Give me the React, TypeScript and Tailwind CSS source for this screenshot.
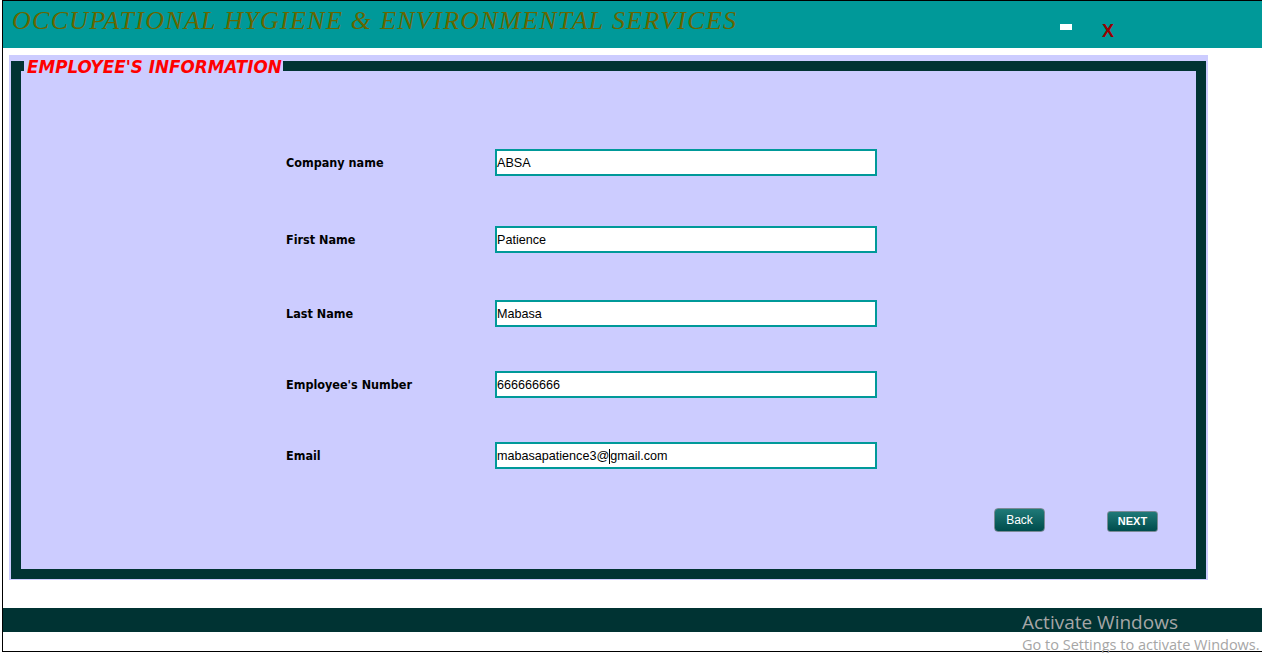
import React from 'react';

const fields = [
  { label: 'Company name', value: 'ABSA', mt: 'mt-[78px]' },
  { label: 'First Name', value: 'Patience', mt: 'mt-[50px]' },
  { label: 'Last Name', value: 'Mabasa', mt: 'mt-[47px]' },
  { label: "Employee's Number", value: '666666666', mt: 'mt-[44px]' },
  { label: 'Email', value: 'mabasapatience3@gmail.com', mt: 'mt-[44px]', caret: 16 },
];

const Field: React.FC<{ label: string; value: string; mt: string; caret?: number }> = ({ label, value, mt, caret }) => (
  <div className={`flex items-center ${mt}`}>
    <label className="w-[209px] pt-[2px] text-[12.5px] font-bold text-black [font-family:'DejaVu_Sans_Condensed','DejaVu_Sans',sans-serif]">
      {label}
    </label>
    <div className="w-[382px] h-[27px] border-2 border-[#009999] bg-white flex items-center pt-[1px] text-[12.6px] text-black [font-family:'Liberation_Sans',Arial,sans-serif]">
      {caret ? (
        <>
          <span>{value.slice(0, caret)}</span>
          <span className="inline-block w-px h-[15px] bg-black" />
          <span>{value.slice(caret)}</span>
        </>
      ) : (
        <span>{value}</span>
      )}
    </div>
  </div>
);

export default function App() {
  return (
    <div className="w-[1262px] h-[653px] bg-white pl-[2px] relative overflow-hidden">
      <div className="h-[652px] border-l border-t border-b border-black flex flex-col">
        {/* title bar */}
        <div className="h-[47px] bg-[#009999] flex items-start shrink-0">
          <h1 className="ml-[9px] mt-[5px] text-[26px] tracking-[1.3px] italic text-[#666600] leading-[30px] whitespace-nowrap [font-family:'Liberation_Serif','Times_New_Roman',serif]">
            OCCUPATIONAL HYGIENE &amp; ENVIRONMENTAL SERVICES
          </h1>
          <div className="absolute left-[1060px] top-[24px] w-[12px] h-[6px] bg-white" />
          <div className="absolute left-[1102px] top-[20px] text-[18px] font-bold text-[#990000] leading-[22px] [font-family:'Liberation_Sans',Arial,sans-serif]">
            X
          </div>
        </div>

        {/* panel */}
        <div className="mt-[7px] ml-[6px] w-[1199px] h-[525px] bg-[#ccccff] pt-[6px] px-[2px] pb-[1px] relative">
          <div className="h-full border-[10px] border-[#003333] bg-[#ccccff] flex flex-col">
            <div className="pl-[265px]">
              {fields.map((f) => (
                <Field key={f.label} {...f} />
              ))}
            </div>
            <div className="flex items-end justify-end gap-[62px] pr-[38px] mt-[39px]">
              <button className="w-[51px] h-[24px] rounded-[4px] border border-[#7a8a96] bg-gradient-to-b from-[#1f7a78] to-[#004c4c] text-white text-[12px] [font-family:'Liberation_Sans',Arial,sans-serif]">
                Back
              </button>
              <button className="w-[51px] h-[21px] rounded-[3px] border border-[#7a8a96] bg-gradient-to-b from-[#1f7a78] to-[#004c4c] text-white text-[11px] font-bold [font-family:'Liberation_Sans',Arial,sans-serif]">
                NEXT
              </button>
            </div>
          </div>
          <span className="absolute left-[15px] top-[2px] bg-[#ccccff] pl-[3px] pr-[1px] leading-[20px] text-[16.8px] font-bold italic text-[#ff0000] [font-family:'DejaVu_Sans',sans-serif]">
            EMPLOYEE'S INFORMATION
          </span>
        </div>

        {/* footer */}
        <div className="mt-[28px] h-[24px] bg-[#003333] shrink-0" />
      </div>

      <div className="absolute left-[1022px] top-[613px] text-[#a6a6a6] [font-family:'Open_Sans','Noto_Sans',sans-serif] leading-none pointer-events-none">
        <div className="text-[19px]">Activate Windows</div>
        <div className="text-[14.5px] mt-[6px] whitespace-nowrap">Go to Settings to activate Windows.</div>
      </div>
    </div>
  );
}
